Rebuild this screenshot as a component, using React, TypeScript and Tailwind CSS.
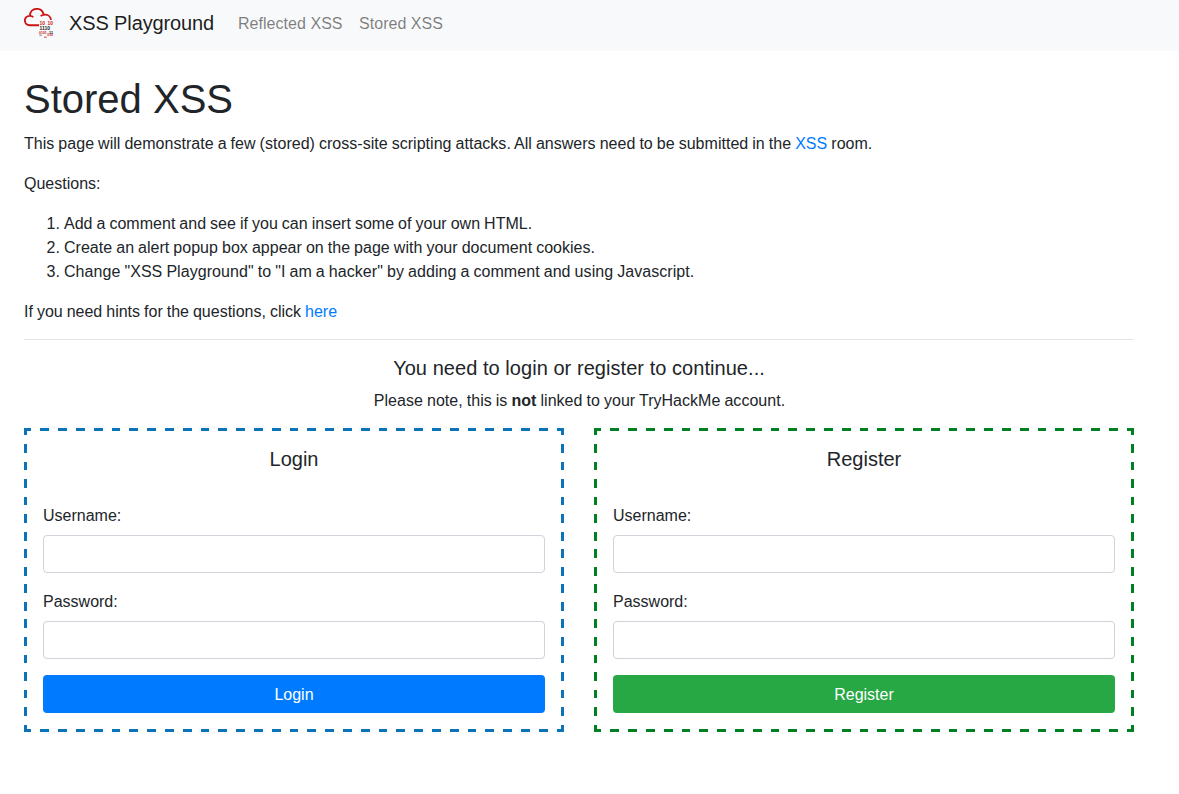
import React from "react";

function Logo() {
  return (
    <svg width="30" height="30" viewBox="0 0 30 30" fill="none" className="mr-[15px] shrink-0">
      <path d="M15 17.200H5.800C2.600 17.200 .9 15.200 .9 12.500S2.900 8.100 5.900 7.900C6 3.500 9 .9 12.800 .9c3.700 0 6.200 2.300 6.900 5.900 3.700-.5 6.800 1.600 7.300 5M5.900 7.900c1.600-.1 2.600.4 3.300 1.300M19.700 6.800c-1.300.1-2.300.6-2.900 1.500" stroke="#cb1515" strokeWidth="1.850" />
      <g fontFamily="Liberation Sans, sans-serif" fontWeight="bold">
        <g fill="#cb1b1b">
          <text x="15.500" y="17" fontSize="5.200" textLength="5.500" lengthAdjust="spacingAndGlyphs">10</text>
          <text x="23.500" y="17" fontSize="5.200" textLength="5.500" lengthAdjust="spacingAndGlyphs">10</text>
          <text x="15" y="25.700" fontSize="3.900" textLength="7.800" lengthAdjust="spacingAndGlyphs">0101</text>
          <text x="23.300" y="28.300" fontSize="3.900" textLength="5.700" lengthAdjust="spacingAndGlyphs">010</text>
        </g>
        <g fill="#202227">
          <text x="15.500" y="21.900" fontSize="5.200" textLength="10.500" lengthAdjust="spacingAndGlyphs">1110</text>
          <text x="25" y="25.600" fontSize="3.900" textLength="4" lengthAdjust="spacingAndGlyphs">11</text>
        </g>
      </g>
      <path d="M15.300 27.200h2.500" stroke="#777" />
      <path d="M20 29.200h2.800" stroke="#d44" />
    </svg>
  );
}

type PanelProps = { title: string; dashes: string; button: string };

function Field({ label, id, type }: { label: string; id: string; type: string }) {
  return (
    <div className="mb-4">
      <label htmlFor={id} className="mb-[7px] block pt-px">{label}</label>
      <input id={id} type={type} className="block h-[38px] w-full rounded border border-[#ced4da] bg-white px-3" />
    </div>
  );
}

// Four gradients draw long dashes centred on the inner corners of each edge.
const dashedFrame =
  "border-[3px] border-transparent [background-image:repeating-linear-gradient(90deg,var(--dash)_0_4.45px,transparent_4.45px_13.35px,var(--dash)_13.35px_17.8px),repeating-linear-gradient(90deg,var(--dash)_0_4.45px,transparent_4.45px_13.35px,var(--dash)_13.35px_17.8px),repeating-linear-gradient(180deg,var(--dash)_0_4.38px,transparent_4.38px_13.15px,var(--dash)_13.15px_17.53px),repeating-linear-gradient(180deg,var(--dash)_0_4.38px,transparent_4.38px_13.15px,var(--dash)_13.15px_17.53px)] [background-size:534px_3px,534px_3px,3px_298px,3px_298px] [background-position:0_-3px,0_298px,-3px_0,534px_0] [background-repeat:repeat-x,repeat-x,repeat-y,repeat-y] [background-origin:padding-box] [background-clip:border-box]";

function Panel({ title, dashes, button }: PanelProps) {
  return (
    <section className={`h-[304px] p-4 ${dashedFrame} ${dashes}`}>
      <h5 className="mb-8 text-center text-[20px] leading-6">{title}</h5>
      <Field label="Username:" id={`${title}-user`} type="text" />
      <Field label="Password:" id={`${title}-pass`} type="password" />
      <button className={`block h-[38px] w-full rounded pt-0.5 text-white ${button}`}>{title}</button>
    </section>
  );
}

export default function App() {
  return (
    <div className="min-h-screen bg-white font-['Liberation_Sans',Arial,sans-serif] text-base leading-6 text-[#212529]">
      <nav className="flex h-[51px] items-start bg-[#f8f9fa] px-6 pt-2">
        <Logo />
        <span className="mr-6 w-[145px] whitespace-nowrap text-[20px] leading-[30px] tracking-[-0.12px] text-black/90">XSS Playground</span>
        <a className="mr-4 w-[105px] whitespace-nowrap pt-px leading-[30px] tracking-[0.04px] text-black/50">Reflected XSS</a>
        <a className="whitespace-nowrap pt-px leading-[30px] tracking-[0.04px] text-black/50">Stored XSS</a>
      </nav>
      <main className="w-[1134px] pl-6 pt-6">
        <h1 className="mb-[9px] text-[40px] leading-[48px]">Stored XSS</h1>
        <div className="[word-spacing:-0.45px]">
          <p className="mb-4 tracking-[0.026px]">This page will demonstrate a few (stored) cross-site scripting attacks. All answers need to be submitted in the <a className="text-[#007bff]">XSS</a> room.</p>
          <p className="mb-4">Questions:</p>
          <ol className="mb-4 list-decimal pl-10">
            <li className="tracking-[0.014px]">Add a comment and see if you can insert some of your own HTML.</li>
            <li className="tracking-[0.026px]">Create an alert popup box appear on the page with your document cookies.</li>
            <li className="tracking-[0.055px]">Change "XSS Playground" to "I am a hacker" by adding a comment and using Javascript.</li>
          </ol>
          <p>If you need hints for the questions, click <a className="text-[#007bff]">here</a></p>
        </div>
        <hr className="mb-4 mt-[15px] border-black/10" />
        <h5 className="mb-[9px] text-center text-[20px] leading-6 tracking-[0.05px]">You need to login or register to continue...</h5>
        <p className="mb-[15px] pl-px text-center tracking-[0.033px] [word-spacing:-0.45px]">Please note, this is <b>not</b> linked to your TryHackMe account.</p>
        <div className="grid grid-cols-2 gap-[30px]">
          <Panel title="Login" dashes="[--dash:#0c73b8]" button="bg-[#007bff]" />
          <Panel title="Register" dashes="[--dash:#008022]" button="bg-[#28a745]" />
        </div>
      </main>
    </div>
  );
}
